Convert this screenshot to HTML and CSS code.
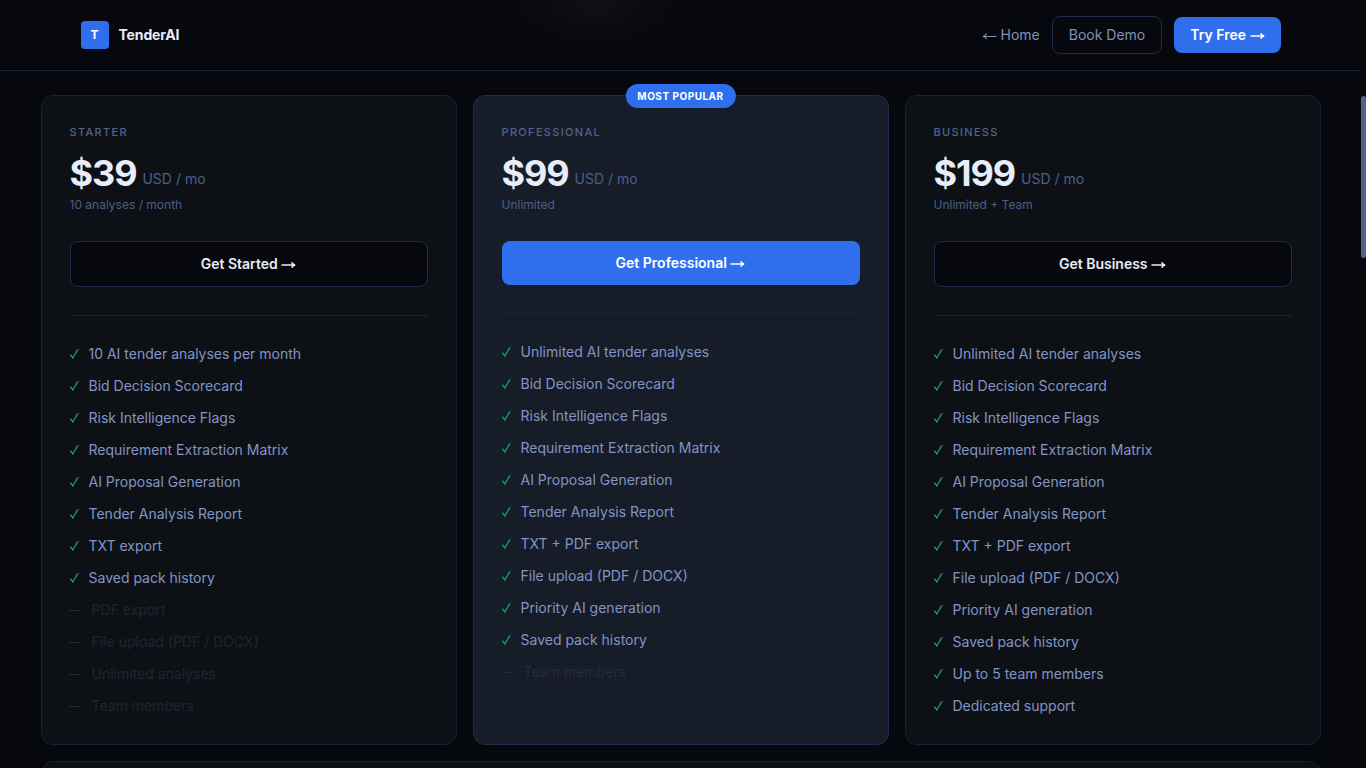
FILE: index.html
```html
<!DOCTYPE html>
<html lang="en">
<head>
  <meta charset="UTF-8">
  <meta name="viewport" content="width=device-width, initial-scale=1.0">
  <title>TenderAI - Pricing</title>
  <link rel="stylesheet" href="styles.css">
</head>
<body>
  <svg class="sprite" aria-hidden="true">
    <symbol id="check" viewBox="0 0 9 12"><path d="M.5 6.6 2.8 10 8 1.2"/></symbol>
    <symbol id="arrow" viewBox="0 0 16 8"><path d="M.5 4h14M11.3 1.2Q12.6 3.4 15 4 12.6 4.6 11.3 6.8"/></symbol>
    <symbol id="arrow-left" viewBox="0 0 16 8"><path d="M15.5 4.5h-14M5 1.4Q3.6 4 1 4.5 3.6 5 5 7.6"/></symbol>
  </svg>
  <div class="page">
    <header class="nav">
      <div class="nav-inner">
        <a class="brand" href="#"><span class="logo">T</span><span class="brand-name">TenderAI</span></a>
        <nav class="nav-links">
          <a class="nav-home" href="#"><svg class="arrow arrow-thin"><use href="#arrow-left"/></svg> Home</a>
          <a class="nav-btn nav-btn-outline" href="#">Book Demo</a>
          <a class="nav-btn nav-btn-primary" href="#">Try Free <svg class="arrow"><use href="#arrow"/></svg></a>
        </nav>
      </div>
    </header>
    <main class="container">
      <div class="plans">
        <section class="card">
          <h2 class="plan-name">Starter</h2>
          <div class="price"><span class="amount">$39</span><span class="per">USD / mo</span></div>
          <p class="limit">10 analyses / month</p>
          <button class="cta" type="button">Get Started <svg class="arrow"><use href="#arrow"/></svg></button>
          <ul class="features">
            <li><svg class="check"><use href="#check"/></svg>10 AI tender analyses per month</li>
            <li><svg class="check"><use href="#check"/></svg>Bid Decision Scorecard</li>
            <li><svg class="check"><use href="#check"/></svg>Risk Intelligence Flags</li>
            <li><svg class="check"><use href="#check"/></svg>Requirement Extraction Matrix</li>
            <li><svg class="check"><use href="#check"/></svg>AI Proposal Generation</li>
            <li><svg class="check"><use href="#check"/></svg>Tender Analysis Report</li>
            <li><svg class="check"><use href="#check"/></svg>TXT export</li>
            <li><svg class="check"><use href="#check"/></svg>Saved pack history</li>
            <li class="off">PDF export</li>
            <li class="off">File upload (PDF / DOCX)</li>
            <li class="off">Unlimited analyses</li>
            <li class="off">Team members</li>
          </ul>
        </section>
        <section class="card featured">
          <span class="badge">MOST POPULAR</span>
          <h2 class="plan-name">Professional</h2>
          <div class="price"><span class="amount">$99</span><span class="per">USD / mo</span></div>
          <p class="limit">Unlimited</p>
          <button class="cta cta-primary" type="button">Get Professional <svg class="arrow"><use href="#arrow"/></svg></button>
          <ul class="features">
            <li><svg class="check"><use href="#check"/></svg>Unlimited AI tender analyses</li>
            <li><svg class="check"><use href="#check"/></svg>Bid Decision Scorecard</li>
            <li><svg class="check"><use href="#check"/></svg>Risk Intelligence Flags</li>
            <li><svg class="check"><use href="#check"/></svg>Requirement Extraction Matrix</li>
            <li><svg class="check"><use href="#check"/></svg>AI Proposal Generation</li>
            <li><svg class="check"><use href="#check"/></svg>Tender Analysis Report</li>
            <li><svg class="check"><use href="#check"/></svg>TXT + PDF export</li>
            <li><svg class="check"><use href="#check"/></svg>File upload (PDF / DOCX)</li>
            <li><svg class="check"><use href="#check"/></svg>Priority AI generation</li>
            <li><svg class="check"><use href="#check"/></svg>Saved pack history</li>
            <li class="off">Team members</li>
          </ul>
        </section>
        <section class="card">
          <h2 class="plan-name">Business</h2>
          <div class="price"><span class="amount">$199</span><span class="per">USD / mo</span></div>
          <p class="limit">Unlimited + Team</p>
          <button class="cta" type="button">Get Business <svg class="arrow"><use href="#arrow"/></svg></button>
          <ul class="features">
            <li><svg class="check"><use href="#check"/></svg>Unlimited AI tender analyses</li>
            <li><svg class="check"><use href="#check"/></svg>Bid Decision Scorecard</li>
            <li><svg class="check"><use href="#check"/></svg>Risk Intelligence Flags</li>
            <li><svg class="check"><use href="#check"/></svg>Requirement Extraction Matrix</li>
            <li><svg class="check"><use href="#check"/></svg>AI Proposal Generation</li>
            <li><svg class="check"><use href="#check"/></svg>Tender Analysis Report</li>
            <li><svg class="check"><use href="#check"/></svg>TXT + PDF export</li>
            <li><svg class="check"><use href="#check"/></svg>File upload (PDF / DOCX)</li>
            <li><svg class="check"><use href="#check"/></svg>Priority AI generation</li>
            <li><svg class="check"><use href="#check"/></svg>Saved pack history</li>
            <li><svg class="check"><use href="#check"/></svg>Up to 5 team members</li>
            <li><svg class="check"><use href="#check"/></svg>Dedicated support</li>
          </ul>
        </section>
      </div>
      <section class="card panel"></section>
    </main>
  </div>
  <div class="scroll-thumb"></div>
</body>
</html>
```
FILE: styles.css
```css
* {
  box-sizing: border-box;
}
body {
  margin: 0;
  font-family: Inter, "Liberation Sans", sans-serif;
  font-size: 14px;
  line-height: 20px;
  background-color: #06080d;
  color: #e8edf8;
}
a {
  color: inherit;
  text-decoration: none;
}
.sprite {
  display: none;
}
.arrow {
  width: 15px;
  height: 8px;
  fill: none;
  stroke: currentColor;
  stroke-width: 1.8;
}
.arrow-thin {
  stroke-width: 1.1;
}
.page {
  height: 100vh;
  margin-right: 5px;
  overflow: hidden;
}

/* nav */
.nav {
  border-bottom: 1px solid #172036;
  background: radial-gradient(ellipse 90px 50px at 595px 0, #101118, #0b0c12 50%, transparent);
}
.nav-inner {
  display: flex;
  align-items: center;
  justify-content: space-between;
  max-width: 1200px;
  height: 70px;
  margin: 0 auto;
}
.brand {
  display: flex;
  align-items: center;
  gap: 10px;
}
.logo {
  width: 28px;
  height: 28px;
  border-radius: 4px;
  background-color: #2f6fed;
  color: #fff;
  font-size: 12px;
  font-weight: 700;
  line-height: 28px;
  text-align: center;
}
.brand-name {
  font-weight: 700;
  letter-spacing: -0.01em;
}
.nav-links {
  display: flex;
  align-items: center;
  gap: 12px;
  color: #8090b8;
}
.nav-btn {
  padding: 8px 16px;
  border-radius: 8px;
}
.nav-btn-outline {
  border: 1px solid #1f2c48;
}
.nav-btn-primary {
  background-color: #2f6fed;
  color: #fff;
  font-weight: 600;
}

/* plans */
.container {
  max-width: 1280px;
  margin: 0 auto;
  padding-top: 24px;
}
.plans {
  display: grid;
  grid-template-columns: repeat(3, 1fr);
  gap: 16px;
}
.card {
  position: relative;
  padding: 28px;
  border: 1px solid #172036;
  border-radius: 12px;
  background-color: #0d1116;
}
.featured {
  background-color: #161c28;
  border-color: #1f2c48;
}
.badge {
  position: absolute;
  top: -12px;
  left: 50%;
  transform: translateX(-50%);
  padding: 0 12px;
  border-radius: 12px;
  background-color: #2f6fed;
  color: #fff;
  font-size: 10px;
  font-weight: 700;
  line-height: 24px;
  letter-spacing: 0.05em;
  white-space: nowrap;
}
.plan-name {
  margin: 0 0 12px;
  color: #50648c;
  font-size: 11px;
  font-weight: 500;
  line-height: 16px;
  letter-spacing: 0.12em;
  text-transform: uppercase;
}
.price {
  display: flex;
  align-items: flex-end;
  gap: 6px;
  margin-bottom: 2px;
}
.amount {
  font-size: 36px;
  font-weight: 700;
  line-height: 42px;
  letter-spacing: -0.03em;
}
.per {
  padding-bottom: 5px;
  color: #4c5f86;
}
.limit {
  margin: 0 0 28px;
  color: #4c5f86;
  font-size: 12px;
  line-height: 17px;
}
.cta {
  display: block;
  width: 100%;
  padding: 12px;
  border: 1px solid #1f2c48;
  border-radius: 8px;
  background-color: #06080d;
  color: #e8edf8;
  font: inherit;
  font-weight: 600;
  cursor: pointer;
}
.cta-primary {
  border: none;
  background-color: #2f6fed;
  color: #fff;
}
.features {
  display: flex;
  flex-direction: column;
  gap: 12px;
  margin: 28px 0 0;
  padding: 28px 0 0;
  border-top: 1px solid #172036;
  list-style: none;
  color: #8494c4;
}
.featured .features {
  border-color: #1b2434;
}
.features li {
  display: flex;
  gap: 10px;
}
.check {
  width: 9px;
  height: 12px;
  margin-top: 4px;
  fill: none;
  stroke: #10b974;
  stroke-width: 1.1;
}
.features .off {
  color: #1e2532;
}
.featured .off {
  color: #252d3c;
}
.features .off::before {
  content: "—";
  color: #1f2c40;
  font-size: 12px;
}
.panel {
  margin-top: 16px;
  min-height: 120px;
}
.scroll-thumb {
  position: fixed;
  top: 96px;
  right: 0;
  width: 5px;
  height: 162px;
  border-radius: 3px;
  background-color: #50648c;
}
```
